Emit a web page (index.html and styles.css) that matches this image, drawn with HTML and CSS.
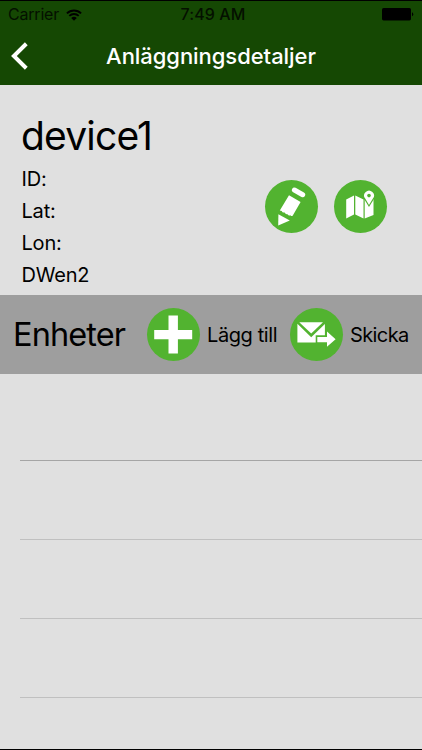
FILE: index.html
```html
<!DOCTYPE html>
<html lang="sv">
<head>
    <meta charset="UTF-8">
    <meta name="viewport" content="width=device-width, initial-scale=1.0">
    <title>Anläggningsdetaljer</title>
    <link rel="stylesheet" href="styles.css">
</head>
<body>
    <header>
        <div class="status-bar">
            <div class="carrier">
                <span class="carrier-name">Carrier</span>
                <svg class="wifi" viewBox="0 0 16 12" width="16" height="12">
                    <path d="M0.9 4.4a10.2 10.2 0 0 1 14.2 0M3.3 6.9a6.8 6.8 0 0 1 9.4 0" fill="none" stroke="#000" stroke-width="1.9"/>
                    <path d="M5.2 9.1a4 4 0 0 1 5.6 0L8 11.8z"/>
                </svg>
            </div>
            <span class="time">7:49 AM</span>
            <svg class="battery" viewBox="0 0 32 13" width="32" height="13">
                <rect x="0" y="0" width="29" height="12.4" rx="1.6"/>
                <path d="M30 4.2a2.2 2.2 0 0 1 0 4z"/>
            </svg>
        </div>
        <div class="nav-bar">
            <a class="back" href="#">
                <svg viewBox="0 0 18 28" width="18" height="28">
                    <path d="M16.3 1.8L3.9 14l12.4 12.2" fill="none" stroke="#fff" stroke-width="4"/>
                </svg>
            </a>
            <h1>Anläggningsdetaljer</h1>
        </div>
    </header>

    <section class="details">
        <div class="info">
            <h2>device1</h2>
            <p>ID:</p>
            <p>Lat:</p>
            <p>Lon:</p>
            <p>DWen2</p>
        </div>
        <div class="actions">
            <button class="round">
                <svg viewBox="0 0 53 53" width="53" height="53">
                    <path d="M29.4 10L37.7 14.7" fill="none" stroke="#fff" stroke-width="5" stroke-linecap="round"/>
                    <g fill="#fff">
                        <path d="M24 15.2L35.6 21.9L27.8 35.6Q26.6 36.8 25.4 35.2Q23.8 36.2 22.5 34.2Q20.7 34.8 19.6 32.5Q17.4 33 16.7 31L14.8 30.6z"/>
                        <path d="M13.4 34.2L24.8 40.4L13.2 45.6z"/>
                    </g>
                </svg>
            </button>
            <button class="round">
                <svg viewBox="0 0 53 53" width="53" height="53">
                    <g fill="#fff">
                        <path d="M12.2 19.4L20 15.5V34.6L12.2 38.5zM21.3 15.5L29.5 19.4V38.5L21.3 34.6zM30.7 19.4L39.5 15.3V35L30.7 38.5z"/>
                        <path d="M35 24.9L31.2 18.6A4.9 4.9 0 1 1 38.9 18.6z" stroke="#52b330" stroke-width="2.2" paint-order="stroke"/>
                    </g>
                    <circle cx="35" cy="15.6" r="1.8" fill="#52b330"/>
                </svg>
            </button>
        </div>
    </section>

    <section class="units">
        <h2>Enheter</h2>
        <button class="round add">
            <svg viewBox="0 0 53 53" width="53" height="53">
                <path d="M21.5 7.6h9.4v14.3h14.3v9.4H30.9v14.3h-9.4V31.3H7.2v-9.4h14.3z" fill="#fff"/>
            </svg>
        </button>
        <span class="label">Lägg till</span>
        <button class="round send">
            <svg viewBox="0 0 53 53" width="53" height="53">
                <g fill="#fff">
                    <path d="M9.3 14.2H33L21.2 25.6z"/>
                    <path d="M7.4 15.8L21.2 29.2L34.9 16V27.2H25.7V34.6H7.4z"/>
                    <path d="M27.3 29H37V23.4L45.6 31.2L37 38.8V34.3H27.3z"/>
                </g>
            </svg>
        </button>
        <span class="label">Skicka</span>
    </section>

    <ul class="unit-list">
        <li class="first"></li>
        <li></li>
        <li></li>
        <li></li>
    </ul>
</body>
</html>
```

FILE: styles.css
```css
:root {
    --header-color: #154803;
    --background-color: #e0e0e0;
    --bar-color: #9e9e9e;
    --button-color: #52b330;
}

* {
    margin: 0;
    padding: 0;
    box-sizing: border-box;
}

body {
    background-color: var(--background-color);
    color: #000;
    font-family: Inter, "Liberation Sans", sans-serif;
    height: 750px;
    display: flex;
    flex-direction: column;
    border-top: 1px solid #000;
    border-bottom: 1px solid #000;
    overflow: hidden;
}

svg {
    display: block;
}

header {
    height: 84px;
    background-color: var(--header-color);
}

.status-bar {
    height: 27px;
    padding: 0 8px;
    display: grid;
    grid-template-columns: 1fr auto 1fr;
    align-items: center;
    color: #041000;
    font-size: 16px;
    line-height: 27px;
}

.carrier {
    display: flex;
    align-items: center;
    gap: 7px;
}

.carrier-name {
    letter-spacing: -0.2px;
}

.time {
    font-weight: 500;
    letter-spacing: 0.1px;
    padding-left: 4px;
}

.battery {
    justify-self: end;
}

.nav-bar {
    height: 56px;
    padding: 0 10px;
    display: grid;
    grid-template-columns: 40px 1fr 40px;
    align-items: center;
}

h1 {
    color: #fff;
    font-size: 22px;
    font-weight: 500;
    letter-spacing: -0.05px;
    text-align: center;
    white-space: nowrap;
}

.details {
    height: 210px;
    padding: 26px 35px 0 22px;
    display: flex;
    justify-content: space-between;
}

.details h2 {
    font-size: 39px;
    font-weight: 400;
    line-height: 50px;
    letter-spacing: -0.8px;
    margin: 0 0 2px -1px;
}

.details p {
    font-size: 20px;
    line-height: 32px;
    letter-spacing: -0.2px;
    margin-left: -0.5px;
}

.actions {
    display: flex;
    gap: 16px;
    padding-top: 69px;
}

.round {
    width: 53px;
    height: 53px;
    flex: none;
    border: none;
    border-radius: 50%;
    background-color: var(--button-color);
    cursor: pointer;
}

.units {
    height: 79px;
    padding-left: 13px;
    display: flex;
    align-items: center;
    background-color: var(--bar-color);
}

.units h2 {
    width: 134px;
    font-size: 32.5px;
    font-weight: 400;
    letter-spacing: -0.9px;
}

.label {
    font-size: 20px;
    letter-spacing: -0.6px;
    margin-left: 7px;
    white-space: nowrap;
}

.add + .label {
    width: 83px;
    letter-spacing: -0.4px;
}

.unit-list {
    list-style: none;
    padding: 8px 0 0 20px;
}

.unit-list li {
    height: 79px;
    border-bottom: 1px solid #c0c0c0;
}

.unit-list .first {
    border-bottom-color: #a5a5a5;
}
```
